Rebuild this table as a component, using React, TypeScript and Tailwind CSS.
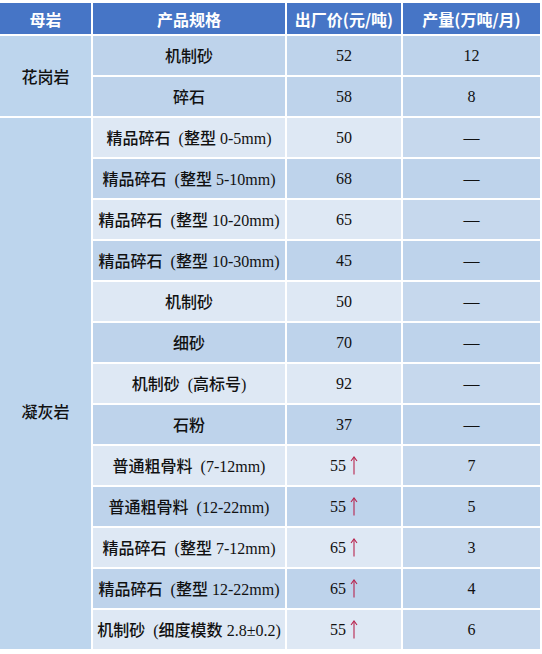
import React from "react";

type Row = {
  spec: string;
  price: string;
  up?: boolean;
  output: string;
  light: boolean;
};

const GRANITE: Row[] = [
  { spec: "机制砂", price: "52", output: "12", light: false },
  { spec: "碎石", price: "58", output: "8", light: false },
];

const TUFF: Row[] = [
  { spec: "精品碎石 (整型 0-5mm)", price: "50", output: "—", light: true },
  { spec: "精品碎石 (整型 5-10mm)", price: "68", output: "—", light: false },
  { spec: "精品碎石 (整型 10-20mm)", price: "65", output: "—", light: true },
  { spec: "精品碎石 (整型 10-30mm)", price: "45", output: "—", light: false },
  { spec: "机制砂", price: "50", output: "—", light: true },
  { spec: "细砂", price: "70", output: "—", light: false },
  { spec: "机制砂 (高标号)", price: "92", output: "—", light: true },
  { spec: "石粉", price: "37", output: "—", light: false },
  { spec: "普通粗骨料 (7-12mm)", price: "55", up: true, output: "7", light: true },
  { spec: "普通粗骨料 (12-22mm)", price: "55", up: true, output: "5", light: false },
  { spec: "精品碎石 (整型 7-12mm)", price: "65", up: true, output: "3", light: true },
  { spec: "精品碎石 (整型 12-22mm)", price: "65", up: true, output: "4", light: false },
  { spec: "机制砂 (细度模数 2.8±0.2)", price: "55", up: true, output: "6", light: true },
];

const bodyFont = "[font-family:'Liberation_Serif','Noto_Sans_CJK_SC',serif]";

// 规格里的中文和数字分开，中文略粗
function Spec({ text }: { text: string }) {
  const parts = text.split(/([\u4e00-\u9fff]+)/).filter(Boolean);
  return (
    <span className="whitespace-pre">
      {parts.map((p, i) =>
        /[\u4e00-\u9fff]/.test(p) ? (
          <span key={i} className="font-medium [font-family:'Noto_Sans_CJK_SC',sans-serif]">
            {p}
          </span>
        ) : (
          <span key={i}>{p.replace(" (", "  (")}</span>
        ),
      )}
    </span>
  );
}

function UpArrow() {
  return (
    <svg width="8" height="19" viewBox="0 0 8 19" className="ml-[4px]">
      <path d="M4 18.5V1.5" stroke="#b8234d" strokeWidth="1.1" fill="none" />
      <path d="M1 5L4 1L7 5" stroke="#b8234d" strokeWidth="1.1" fill="none" />
    </svg>
  );
}

function Cells({ row }: { row: Row }) {
  const mid = row.light ? "bg-[#dee8f4]" : "bg-[#bed3eb]";
  const last = row.light ? "bg-[#c6d8ed]" : "bg-[#bed3eb]";
  return (
    <>
      <div className={`flex items-center justify-center text-[16px] text-[#111] ${bodyFont} ${mid}`}>
        <Spec text={row.spec} />
      </div>
      <div className={`flex items-center justify-center text-[16px] text-[#111] ${bodyFont} ${mid}`}>
        <span>{row.price}</span>
        {row.up ? <UpArrow /> : null}
      </div>
      <div className={`flex items-center justify-center text-[16px] text-[#111] ${bodyFont} ${last}`}>
        {row.output}
      </div>
    </>
  );
}

export default function App() {
  const headers = ["母岩", "产品规格", "出厂价(元/吨)", "产量(万吨/月)"];
  return (
    <div className="h-[654px] w-[542px] bg-white pt-[3px]">
      <div className="grid w-[540px] grid-cols-[91px_192px_114px_137px] grid-rows-[31px_repeat(15,39px)] gap-[2px] bg-white">
        {headers.map((h) => (
          <div
            key={h}
            className="flex items-center justify-center bg-[#4675c6] text-[16px] font-bold text-white [font-family:'Noto_Sans_CJK_SC',sans-serif]"
          >
            {h}
          </div>
        ))}

        <div className="row-span-2 flex items-center justify-center bg-[#bdd5ed] text-[16px] font-medium text-[#111] [font-family:'Noto_Sans_CJK_SC',sans-serif]">
          花岗岩
        </div>
        {GRANITE.map((r) => (
          <Cells key={r.spec} row={r} />
        ))}

        <div className="row-span-13 flex items-center justify-center bg-[#bdd5ed] pt-[54px] text-[16px] font-medium text-[#111] [font-family:'Noto_Sans_CJK_SC',sans-serif]">
          凝灰岩
        </div>
        {TUFF.map((r) => (
          <Cells key={r.spec} row={r} />
        ))}
      </div>
    </div>
  );
}
